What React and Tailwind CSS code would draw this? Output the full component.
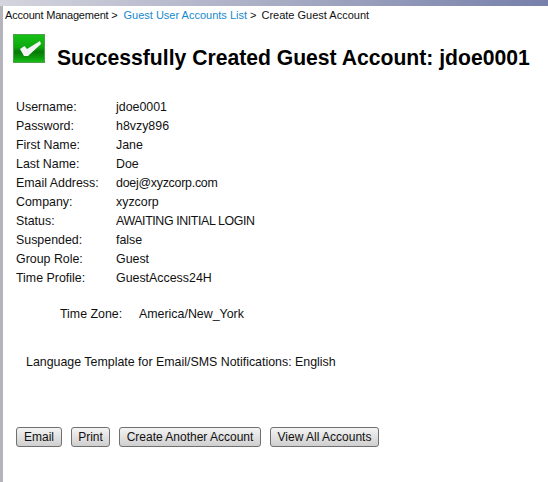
const rows = [
  ["Username:", "jdoe0001", ""],
  ["Password:", "h8vzy896", ""],
  ["First Name:", "Jane", ""],
  ["Last Name:", "Doe", ""],
  ["Email Address:", "doej@xyzcorp.com", "tracking-[-0.25px]"],
  ["Company:", "xyzcorp", ""],
  ["Status:", "AWAITING INITIAL LOGIN", "tracking-[-0.4px]"],
  ["Suspended:", "false", ""],
  ["Group Role:", "Guest", ""],
  ["Time Profile:", "GuestAccess24H", ""],
];

function Btn({ className, children }) {
  return (
    <button className={`h-[20px] shrink-0 rounded-[3px] border border-[#707070] bg-gradient-to-b from-[#f4f4f4] to-[#cfcfcf] text-[12px] leading-[16px] text-[#111] whitespace-nowrap ${className}`}>
      {children}
    </button>
  );
}

export default function App() {
  return (
    <div className="w-[548px] h-[482px] bg-white overflow-hidden flex flex-col text-[12.4px] leading-[19px] text-[#111]" style={{ fontFamily: '"Liberation Sans", Arial, sans-serif' }}>
      <div className="h-[6px] shrink-0 bg-gradient-to-r from-[#d4d4de] via-[#a9adc4] to-[#7680aa]" />
      <div className="flex flex-1 min-h-0">
        <div className="w-[3px] shrink-0 bg-[#b4b4bc]" />
        <div className="flex-1 min-w-0 flex flex-col">
          <div className="h-[19px] pl-[2px] text-[11px] leading-[19px] whitespace-nowrap flex">
            <span className="tracking-[-0.2px]">Account Management &gt;</span>
            <span className="ml-[6px] text-[#1789cc]">Guest User Accounts List</span>
            <span className="ml-[3px]">&gt;</span>
            <span className="ml-[5px]">Create Guest Account</span>
          </div>
          <div className="flex items-start pl-[10px] mt-[9px] h-[62px]">
            <svg width="32" height="29" viewBox="0 0 32 29" className="shrink-0">
              <defs>
                <linearGradient id="g" x1="0" y1="0" x2="0" y2="1">
                  <stop offset="0" stopColor="#16c216" />
                  <stop offset="0.45" stopColor="#0fa80f" />
                  <stop offset="0.62" stopColor="#067806" />
                  <stop offset="0.85" stopColor="#0ea00e" />
                  <stop offset="1" stopColor="#18c018" />
                </linearGradient>
              </defs>
              <rect x="0.5" y="0.5" width="31" height="28" fill="url(#g)" stroke="#4f9f4f" />
              <path d="M7 15 L11.5 12 L14 15 L27 7 L28 10 L15 22 L11 22 Z" fill="#f4f4f4" />
            </svg>
            <h1 className="ml-[12px] mt-[10px] text-[21.15px] leading-[28px] font-bold text-black whitespace-nowrap">
              Successfully Created Guest Account: jdoe0001
            </h1>
          </div>
          <div className="pl-[13px] mt-[2px]">
            {rows.map(([k, v, c]) => (
              <div key={k} className="flex h-[19px]">
                <span className="w-[100px]">{k}</span>
                <span className={c}>{v}</span>
              </div>
            ))}
          </div>
          <div className="flex pl-[57px] mt-[17px]">
            <span className="w-[79px]">Time Zone:</span>
            <span>America/New_York</span>
          </div>
          <div className="pl-[23px] mt-[29px]">Language Template for Email/SMS Notifications: English</div>
          <div className="flex gap-[9px] pl-[13px] mt-[55px]">
            <Btn className="w-[46px]">Email</Btn>
            <Btn className="w-[39px]">Print</Btn>
            <Btn className="w-[142px]">Create Another Account</Btn>
            <Btn className="w-[109px]">View All Accounts</Btn>
          </div>
        </div>
      </div>
    </div>
  );
}
